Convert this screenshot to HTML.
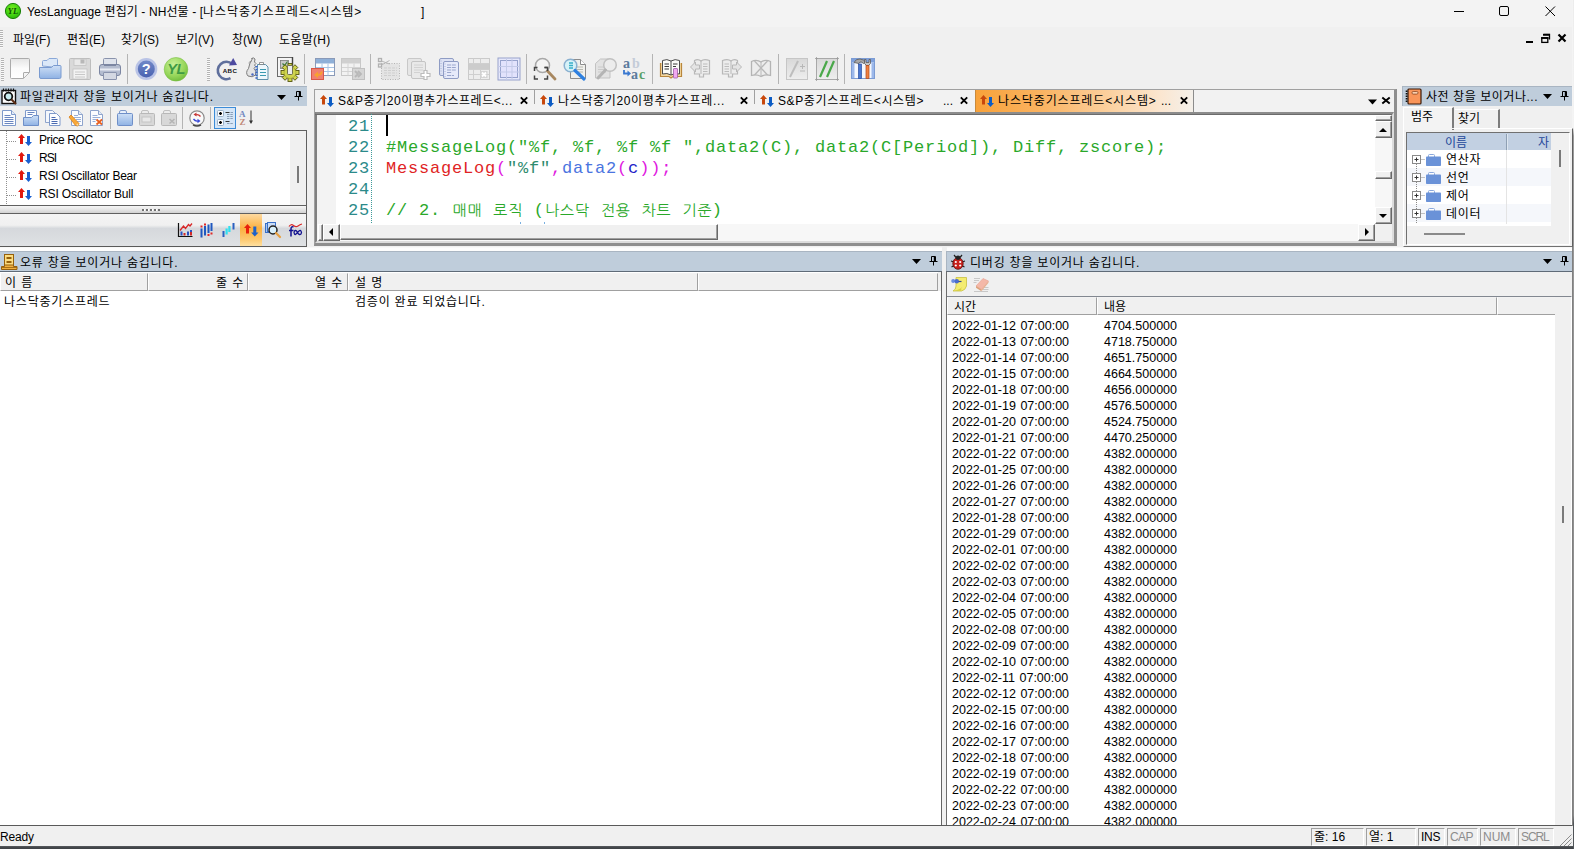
<!DOCTYPE html>
<html lang="ko">
<head>
<meta charset="utf-8">
<title>YesLanguage 편집기</title>
<style>
*{box-sizing:border-box;margin:0;padding:0}
html,body{width:1574px;height:849px;overflow:hidden;background:#f0f0f0}
body{font-family:"Liberation Sans","Noto Sans CJK KR",sans-serif;font-size:12px;color:#000;position:relative}
.a{position:absolute}
.t{position:absolute;white-space:nowrap;line-height:16px;height:16px;margin-top:1px}
#titlebar{left:0;top:0;width:1574px;height:27px;background:#f3f3f3}
.hdr{position:absolute;height:20px;background:#bfcddb}
.hdr .t{top:2px;font-size:12px;letter-spacing:.78px}
.sep{position:absolute;width:1px;background:#b4b4b4}
.grip{position:absolute;width:3px;background-image:repeating-linear-gradient(to bottom,#b4b4b4 0 1px,#fafafa 1px 2px)}
.colh{position:absolute;background:#f0f0f0;border-right:1px solid #a0a0a0;border-bottom:1px solid #a0a0a0;border-left:1px solid #fff;border-top:1px solid #f2f2f2}
.mono{font-family:"Liberation Mono","NanumGothicCoding","Noto Sans CJK KR",monospace;font-size:17px;letter-spacing:.8px;line-height:21px;height:21px;white-space:pre;position:absolute;margin-top:1px}
.btn3d{position:absolute;background:#f0f0f0;border:1px solid;border-color:#fff #696969 #696969 #fff;box-shadow:inset -1px -1px 0 #a0a0a0}
svg{position:absolute;overflow:visible}
.sc{top:828px;height:18px;border:1px solid;border-color:#a0a0a0 #fff #fff #a0a0a0}
.dr{font-size:12.5px;word-spacing:1px}
.k{font-size:15px;letter-spacing:-.1px}
</style>
</head>
<body>
<!-- title bar -->
<div id="titlebar" class="a"></div>
<svg style="left:4px;top:2px" width="18" height="18" viewBox="0 0 18 18">
  <defs><radialGradient id="gYL" cx="0.45" cy="0.35" r="0.75"><stop offset="0" stop-color="#7af020"/><stop offset="0.6" stop-color="#3fd010"/><stop offset="1" stop-color="#22a008"/></radialGradient></defs>
  <circle cx="9" cy="9" r="7.600" fill="url(#gYL)" stroke="#1c8208" stroke-width="1"/>
  <text x="9" y="12" font-family="Liberation Serif,serif" font-size="8.500" font-style="italic" font-weight="bold" fill="#0a5206" text-anchor="middle">YL</text>
</svg>
<div class="t" id="ttl" style="left:27px;top:3px;letter-spacing:.1px">YesLanguage 편집기 - NH선물 - [<span style="letter-spacing:.9px">나스닥중기스프레드&lt;시스템&gt;</span></div>
<div class="t" style="left:421px;top:3px">]</div>
<!-- window controls -->
<svg style="left:1450px;top:2px" width="110" height="20" viewBox="0 0 110 20" fill="none" stroke="#000" stroke-width="1">
  <path d="M4 9.5h10"/>
  <rect x="49.5" y="4.5" width="9" height="9" rx="1.5"/>
  <path d="M95.500 4.500l9.500 9.500M105 4.500l-9.500 9.500"/>
</svg>
<!-- menu bar -->
<div class="grip" style="left:0;top:30px;height:18px"></div>
<div class="t" style="left:13px;top:31px">파일(F)</div>
<div class="t" style="left:67px;top:31px">편집(E)</div>
<div class="t" style="left:121px;top:31px">찾기(S)</div>
<div class="t" style="left:176px;top:31px">보기(V)</div>
<div class="t" style="left:232px;top:31px">창(W)</div>
<div class="t" style="left:279px;top:31px;letter-spacing:.3px">도움말(H)</div>
<!-- MDI controls -->
<svg style="left:1524px;top:32px" width="46" height="14" viewBox="0 0 46 14" fill="none" stroke="#000">
  <path d="M2 10h7" stroke-width="2"/>
  <path d="M19.500 2.500h6v5" stroke-width="1.300"/><path d="M19 2.800h7" stroke-width="1.800"/>
  <rect x="17.800" y="5.800" width="6" height="4.600" stroke-width="1.300"/><path d="M17.200 6h7.200" stroke-width="1.800"/>
  <path d="M34.5 2.5l7 7M41.5 2.5l-7 7" stroke-width="2.2"/>
</svg>
<!-- main toolbar -->
<div class="grip" style="left:1px;top:58px;height:23px"></div>
<div class="grip" style="left:207px;top:58px;height:23px"></div>
<div class="sep" style="left:127px;top:54px;height:30px"></div>
<div class="sep" style="left:304px;top:54px;height:30px"></div>
<div class="sep" style="left:370px;top:54px;height:30px"></div>
<div class="sep" style="left:526px;top:54px;height:30px"></div>
<div class="sep" style="left:652px;top:54px;height:30px"></div>
<div class="sep" style="left:778px;top:54px;height:30px"></div>
<div class="sep" style="left:844px;top:54px;height:30px"></div>
<!--TBICONS-->
<svg width="0" height="0"><defs>
<linearGradient id="gPage" x1="0" y1="0" x2="0" y2="1"><stop offset="0" stop-color="#e4e4e4"/><stop offset="0.5" stop-color="#fbfbfb"/><stop offset="1" stop-color="#fff"/></linearGradient>
<linearGradient id="gFold" x1="0" y1="0" x2="0" y2="1"><stop offset="0" stop-color="#cfe0f6"/><stop offset="1" stop-color="#8fb2e4"/></linearGradient>
<linearGradient id="gHelp" x1="0" y1="0" x2="0" y2="1"><stop offset="0" stop-color="#7088c8"/><stop offset="1" stop-color="#4a62b0"/></linearGradient>
<radialGradient id="gYL2" cx="0.4" cy="0.3" r="0.8"><stop offset="0" stop-color="#c8f098"/><stop offset="0.6" stop-color="#96d65a"/><stop offset="1" stop-color="#66b434"/></radialGradient>
<linearGradient id="gGray" x1="0" y1="0" x2="0" y2="1"><stop offset="0" stop-color="#d8d8d8"/><stop offset="1" stop-color="#eeeeee"/></linearGradient>
</defs></svg>
<!-- new -->
<svg style="left:8px;top:57px" width="24" height="24" viewBox="0 0 24 24"><path d="M3.500 1.500h17q1 0 1 1v13l-6 6h-12q-1 0-1-1v-18q0-1 1-1z" fill="url(#gPage)" stroke="#ababab" stroke-width="1"/><path d="M21 15.500h-5q-0.500 0-0.500 0.500v5" fill="#f4f4f4" stroke="#ababab" stroke-width="1"/></svg>
<!-- open -->
<svg style="left:38px;top:57px" width="24" height="24" viewBox="0 0 24 24"><path d="M4.500 9v-4.500q0-1 1-1h3.500l2-2h7.500q1 0 1 1v8z" fill="#dbe8f8" stroke="#8aa8d8" stroke-width="1"/><path d="M1.500 10.500h12l2-2h6.500q1 0 1 1v10.500q0 1.500-1.500 1.500h-18.500q-1.500 0-1.500-1.500z" fill="url(#gFold)" stroke="#7a9bd0" stroke-width="1"/></svg>
<!-- save (disabled) -->
<svg style="left:68px;top:57px" width="24" height="24" viewBox="0 0 24 24"><rect x="1.500" y="1.500" width="21" height="21" rx="1" fill="#d9d9d9" stroke="#bdbdbd"/><rect x="6" y="2" width="12" height="6.500" fill="#e9e9e9" stroke="#c4c4c4" stroke-width="0.800"/><rect x="12.500" y="2.500" width="4" height="4" fill="#b8b8b8"/><rect x="5" y="12" width="14" height="10" fill="#f3f3f3" stroke="#c4c4c4" stroke-width="0.800"/><path d="M7 15h10M7 17.500h10M7 20h10" stroke="#c8c8c8" stroke-width="1"/></svg>
<!-- print -->
<svg style="left:98px;top:57px" width="24" height="24" viewBox="0 0 24 24"><rect x="5.500" y="1.500" width="13" height="9" rx="1" fill="#dfe3ec" stroke="#8a93ac"/><rect x="1.500" y="7.500" width="21" height="11" rx="2.500" fill="#b4bccf" stroke="#7c86a2"/><path d="M2 12.500h20" stroke="#e8ebf2" stroke-width="2"/><rect x="5.500" y="15.500" width="13" height="7" rx="0.500" fill="#d4d8e2" stroke="#8a93ac"/><path d="M6 8.500h12" stroke="#7c86a2" stroke-width="1"/></svg>
<!-- help -->
<svg style="left:134px;top:57px" width="24" height="24" viewBox="0 0 24 24"><circle cx="12.300" cy="12" r="11" fill="#b9c3e6"/><circle cx="12.300" cy="12" r="8.500" fill="url(#gHelp)"/><text x="12.300" y="17.300" font-family="Liberation Sans,sans-serif" font-size="14.500" font-weight="bold" fill="#fff" text-anchor="middle">?</text></svg>
<!-- YL -->
<svg style="left:164px;top:57px" width="24" height="24" viewBox="0 0 24 24"><circle cx="12" cy="12.300" r="11.800" fill="url(#gYL2)" stroke="#7cc048" stroke-width="0.600"/><text x="12" y="17.300" font-family="Liberation Sans,sans-serif" font-size="14.500" font-style="italic" font-weight="bold" fill="#3f9a44" text-anchor="middle" letter-spacing="-0.500">YL</text></svg>
<!-- ABC refresh -->
<svg style="left:215px;top:57px" width="24" height="24" viewBox="0 0 24 24"><path d="M15.500 21.200a8.700 8.700 0 1 1 1.800-14.200" fill="none" stroke="#5f6f9c" stroke-width="2.600"/><path d="M14 8.500l8-0.500l-3.800-7z" fill="#4d4aa0"/><text x="15" y="15.500" font-family="Liberation Sans,sans-serif" font-size="6.200" font-weight="bold" fill="#111" text-anchor="middle" letter-spacing="0.400">ABC</text></svg>
<!-- keys + doc -->
<svg style="left:245px;top:57px" width="24" height="24" viewBox="0 0 24 24"><path d="M6.500 1.500q2-1.500 3.500 0.500l-0.500 3l1.500 1.500l-1.500 1.500l1 1.500l-1.500 2q3 2.500 1.500 6.500q-3 3-7.500 1q-3-3.500 0.500-7.500q1-6 4-10z" fill="#e4e4e4" stroke="#7c7c7c" stroke-width="1"/><path d="M3.500 6q1.500-2 3-1.500" fill="none" stroke="#8c8c8c" stroke-width="0.800"/><path d="M12.500 10.500v-3h8l2.500 2.500v12.500h-11z" fill="#eef7fc" stroke="#5e8fa8" stroke-width="1"/><path d="M14.500 5.500h4v2h-4z" fill="#fff" stroke="#7c7c7c" stroke-width="0.800"/><path d="M15 12.500h6M15 15.500h6M15 18.500h6" stroke="#3a9ab0" stroke-width="1.200"/><path d="M11.500 9v13" stroke="#3a66c8" stroke-width="2.200" stroke-dasharray="1.600 1.200"/><circle cx="7.500" cy="17.500" r="1.200" fill="#4a6ac0"/></svg>
<!-- gear + doc -->
<svg style="left:275px;top:57px" width="24" height="24" viewBox="0 0 24 24"><rect x="2.500" y="0.500" width="15" height="19" fill="#f4f4f4" stroke="#6a6a6a"/><rect x="5.500" y="3.500" width="8" height="8" fill="#c8c8c8" stroke="#7a7a7a" stroke-width="0.800"/><path d="M7.500 6.500l2 2l3-4" stroke="#3a7a3a" stroke-width="1.200" fill="none"/><path d="M17.500 0v8" stroke="#444" stroke-width="1.400"/><g transform="translate(15 15.500)"><g fill="#cfd44e" stroke="#55550f" stroke-width="0.900"><rect x="-2" y="-9" width="4" height="18"/><rect x="-9" y="-2" width="18" height="4"/><rect x="-2" y="-9" width="4" height="18" transform="rotate(45)"/><rect x="-2" y="-9" width="4" height="18" transform="rotate(-45)"/></g><circle r="6" fill="#cfd44e"/><circle r="6" fill="none" stroke="#8a8a20" stroke-width="0.500"/><rect x="-2.500" y="-7" width="5" height="9" rx="1" fill="#ececec" stroke="#55553a" stroke-width="0.800"/></g></svg>
<!-- table import -->
<svg style="left:311px;top:57px" width="24" height="24" viewBox="0 0 24 24"><rect x="4.500" y="1.500" width="19" height="17" fill="#fff" stroke="#8a9ab8"/><rect x="5" y="2" width="18" height="4.500" fill="#8fb0d8"/><path d="M5 10.500h18M5 14.500h18M11 6.500v12M17 6.500v12" stroke="#a8c4e4" stroke-width="1"/><rect x="0.500" y="11.500" width="12" height="11" fill="#f08070" stroke="#d85848"/><path d="M10.500 14.500q0.500 3.500-4.500 3.500" stroke="#f8a030" stroke-width="2" fill="none"/><path d="M7 14.500l-4 3.500l4 3z" fill="#f8a030"/></svg>
<!-- table export (disabled) -->
<svg style="left:341px;top:57px" width="24" height="24" viewBox="0 0 24 24"><rect x="0.500" y="1.500" width="19" height="17" fill="#f2f2f2" stroke="#c8c8c8"/><rect x="1" y="2" width="18" height="4.500" fill="#d0d0d0"/><path d="M1 10.500h18M1 14.500h18M7 6.500v12M13 6.500v12" stroke="#d4d4d4" stroke-width="1"/><rect x="11.500" y="11.500" width="12" height="11" fill="#d6d6d6" stroke="#c0c0c0"/><path d="M14 14l3 3l-3 3M17 14l3 3l-3 3" stroke="#b8b8b8" stroke-width="1.800" fill="none"/></svg>
<!-- cut (disabled) -->
<svg style="left:377px;top:57px" width="24" height="24" viewBox="0 0 24 24"><rect x="4.500" y="6.500" width="18" height="16" fill="#e4e4e4" stroke="#b4b4b4" stroke-dasharray="1 1.500"/><path d="M7 11h13M7 13.500h13M7 16h13M7 18.500h13" stroke="#cfcfcf" stroke-width="1" stroke-dasharray="3 1"/><rect x="1.500" y="1.500" width="3" height="3" fill="none" stroke="#b0b0b0" stroke-width="1.300"/><rect x="1.500" y="7" width="3" height="3" fill="none" stroke="#b0b0b0" stroke-width="1.300"/><path d="M4.500 4l8 3M4.500 8l8-4.500" stroke="#b8b8b8" stroke-width="1"/></svg>
<!-- copy+ (disabled) -->
<svg style="left:407px;top:57px" width="24" height="24" viewBox="0 0 24 24"><rect x="0.500" y="1.500" width="14" height="17" rx="1.500" fill="#e6e6e6" stroke="#c8c8c8"/><rect x="4.500" y="4.500" width="14" height="17" rx="1.500" fill="#e9e9e9" stroke="#c4c4c4"/><path d="M7 8h9M7 10.500h9M7 13h9M7 15.500h6" stroke="#d2d2d2" stroke-width="1"/><path d="M17 13.500h3v3h3v3h-3v3h-3v-3h-3v-3h3z" fill="#fff" stroke="#bdbdbd" stroke-width="1.200"/></svg>
<!-- copy -->
<svg style="left:437px;top:57px" width="24" height="24" viewBox="0 0 24 24"><rect x="2.500" y="1.500" width="14" height="17" rx="1.500" fill="#dde2f4" stroke="#8f9cc4"/><rect x="6.500" y="4.500" width="15" height="17" rx="1.500" fill="#e6eafa" stroke="#8f9cc4"/><path d="M10 8h9M10 10.500h9M10 13h9M10 15.500h5M10 18.500h7" stroke="#9aa6cc" stroke-width="1" stroke-dasharray="4 0.800"/><path d="M8 6.500v14M4 3.500v13" stroke="#9aa6cc" stroke-width="0.800" stroke-dasharray="1 1.500"/></svg>
<!-- table delete (disabled) -->
<svg style="left:467px;top:57px" width="24" height="24" viewBox="0 0 24 24"><rect x="1.500" y="1.500" width="21" height="21" fill="#ededed" stroke="#cacaca"/><path d="M1.500 6.500h21M1.500 12.500h21M1.500 17.500h21M6.500 1.500v21M13.500 1.500v5M13.500 12.500v10" stroke="#cfcfcf" stroke-width="1"/><rect x="2" y="7" width="20" height="5" fill="#cccccc"/><rect x="13.500" y="14" width="7" height="7" fill="#d4d4d4"/><path d="M15 15.500l4 4M19 15.500l-4 4" stroke="#fff" stroke-width="1.800"/></svg>
<!-- grid select -->
<svg style="left:497px;top:57px" width="24" height="24" viewBox="0 0 24 24"><rect x="1" y="1" width="22" height="22" fill="#e6e8fb" stroke="#97a2cc" stroke-width="1"/><rect x="3.500" y="3.500" width="17" height="17" fill="#e2e2fc" stroke="#97a2cc" stroke-width="1"/><path d="M9.500 1v22M15 1v22M1 9.500h22M1 15h22" stroke="#c4cae8" stroke-width="1"/></svg>
<!-- find -->
<svg style="left:533px;top:57px" width="24" height="24" viewBox="0 0 24 24"><circle cx="9.500" cy="8.500" r="7" fill="#f4f4f4" stroke="#a8a8a8" stroke-width="1.500"/><path d="M14.500 14l7.500 8" stroke="#a88860" stroke-width="2.800" stroke-linecap="round"/><path d="M1.500 14v-3.500h3M14.500 10.500h-3M1.500 18.500v3.500h3.500M14.500 18.500v3.500h-3.500" stroke="#444" stroke-width="1.500" fill="none"/><path d="M11.500 10.500h3v3.500" stroke="#444" stroke-width="1.500" fill="none"/></svg>
<!-- find in doc -->
<svg style="left:563px;top:57px" width="24" height="24" viewBox="0 0 24 24"><path d="M7.500 2.500h10l5 5v14h-15z" fill="#f0f0ec" stroke="#8c8c8c"/><path d="M17.500 2.500v5h5" fill="#fff" stroke="#8c8c8c"/><path d="M13 10h7M13 12.500h7M13 15h7" stroke="#b8b8b0" stroke-width="1"/><circle cx="7.500" cy="8.500" r="6.300" fill="#d6f2f8" stroke="#8ab0d0" stroke-width="1.500"/><path d="M6 6h4M6 8.500h4M6 11h4" stroke="#3ab0c8" stroke-width="1.300"/><path d="M12 13.500l9 8.500" stroke="#2e80e0" stroke-width="3.200" stroke-linecap="round"/></svg>
<!-- find next (disabled) -->
<svg style="left:593px;top:57px" width="24" height="24" viewBox="0 0 24 24"><path d="M2.500 6.500l5-4.500h9.500v19h-14.500z" fill="#e2e2e2" stroke="#c2c2c2"/><path d="M5 10h8M5 12.500h8M5 15h8" stroke="#cacaca" stroke-width="1"/><circle cx="17" cy="8" r="6.300" fill="#ececec" stroke="#c0c0c0" stroke-width="1.500"/><path d="M12.500 13l-7.500 8" stroke="#b4b4b4" stroke-width="3" stroke-linecap="round"/></svg>
<!-- replace ab->ac -->
<svg style="left:623px;top:57px" width="24" height="24" viewBox="0 0 24 24"><text x="0" y="10.500" font-family="Liberation Serif,serif" font-size="14" font-weight="bold" fill="#5a7a9c">a</text><text x="9" y="10.500" font-family="Liberation Serif,serif" font-size="14" font-weight="bold" fill="#c4ccd8">b</text><text x="8" y="22" font-family="Liberation Serif,serif" font-size="14" font-weight="bold" fill="#5a7a9c">a</text><text x="16" y="22" font-family="Liberation Serif,serif" font-size="14" font-weight="bold" fill="#5aa068">c</text><path d="M1 13v3.500h4.500" stroke="#3a78d0" stroke-width="1.800" fill="none"/><path d="M4.500 13.500l3.500 3l-3.500 3z" fill="#3a78d0"/></svg>
<!-- book -->
<svg style="left:659px;top:57px" width="24" height="24" viewBox="0 0 24 24"><path d="M1.500 6v13.500h8.500l2 1.500l2-1.500h8.500v-13.500" fill="#f4d8a0" stroke="#b8863c" stroke-width="1.200"/><path d="M3.500 3.500q4.500-2 8.500 0.500q4-2.500 8.500-0.500v13.500q-4.500-1.500-8.500 1q-4-2.500-8.500-1z" fill="#fcfcf8" stroke="#4a4a4a" stroke-width="1"/><path d="M12 4v14" stroke="#4a4a4a" stroke-width="1"/><path d="M5.500 7h4.500M5.500 9.500h4.500M5.500 12h4.500M14 7h4.500M14 9.500h3" stroke="#3a3a3a" stroke-width="1"/><rect x="14.500" y="11.500" width="4" height="9.500" rx="0.500" fill="#f0a8f0" stroke="#a060a8" stroke-width="0.800"/></svg>
<!-- book prev (disabled) -->
<svg style="left:689px;top:57px" width="24" height="24" viewBox="0 0 24 24"><path d="M5.500 3.500q3.500-2 6.500 0.500q3-2.500 8.500-0.500v13.500h-6v3h-4v-3h-5z" fill="#ececec" stroke="#b8b8b8" stroke-width="1.200"/><path d="M1.500 10l5-5v3h4v4h-4v3z" fill="#e4e4e4" stroke="#b8b8b8" stroke-width="1"/><path d="M14 7h4.500M14 9.500h4.500M14 12h4.500M14 14.500h4.500" stroke="#bcbcbc" stroke-width="1"/><path d="M12 4v13" stroke="#b8b8b8"/></svg>
<!-- book next (disabled) -->
<svg style="left:719px;top:57px" width="24" height="24" viewBox="0 0 24 24"><path d="M3.500 3.500q5.500-2 8.500 0.500q3-2.500 6.500-0.500v13.500h-5v3h-4v-3h-6z" fill="#ececec" stroke="#b8b8b8" stroke-width="1.200"/><path d="M22.500 10l-5-5v3h-4v4h4v3z" fill="#e4e4e4" stroke="#b8b8b8" stroke-width="1"/><path d="M5.500 7h4.500M5.500 9.500h4.500M5.500 12h4.500M5.500 14.500h4.500" stroke="#bcbcbc" stroke-width="1"/><path d="M12 4v13" stroke="#b8b8b8"/></svg>
<!-- book clear (disabled) -->
<svg style="left:749px;top:57px" width="24" height="24" viewBox="0 0 24 24"><path d="M2.500 4.500q5-2.500 9.500 0.500q4.500-3 9.500-0.500v14q-5-1.500-9.500 1q-4.500-2.500-9.500-1z" fill="#ededed" stroke="#b4b4b4" stroke-width="1.300"/><path d="M5.500 4l13 14M18.500 4l-13 14" stroke="#b8b8b8" stroke-width="1.300"/><path d="M12 5v14" stroke="#b8b8b8"/></svg>
<!-- comment toggle (disabled) -->
<svg style="left:785px;top:57px" width="24" height="24" viewBox="0 0 24 24"><rect x="1.500" y="1.500" width="21" height="21" fill="url(#gGray)" stroke="#c6c6c6"/><path d="M5 20l8-16" stroke="#bdbdbd" stroke-width="2"/><path d="M15 9.500h5M17.500 7v5M15 14h5" stroke="#b8b8b8" stroke-width="1"/></svg>
<!-- comment -->
<svg style="left:815px;top:57px" width="24" height="24" viewBox="0 0 24 24"><rect x="1.500" y="1.500" width="21" height="21" fill="url(#gGray)" stroke="#a8a8a8"/><path d="M5 20l7-16M12 20l7-16" stroke="#4aa84a" stroke-width="2.200"/><path d="M0 1.500h3M1.500 0v3M21 1.500h3M22.500 0v3M0 22.500h3M1.500 21v3M21 22.500h3M22.500 21v3" stroke="#9c9c9c" stroke-width="0.800"/></svg>
<!-- tools -->
<svg style="left:851px;top:57px" width="24" height="24" viewBox="0 0 24 24"><rect x="0.500" y="1.500" width="23" height="20" fill="#f4f8fe" stroke="#7c9cd4"/><rect x="1" y="2" width="22" height="3.500" fill="#7ea0dc"/><rect x="1" y="5.500" width="2.500" height="15.500" fill="#9cb8ea"/><rect x="20.500" y="5.500" width="2.500" height="15.500" fill="#9cb8ea"/><path d="M3 5.500q2-4 6-3.500q4 0.500 5.500 3l-2 1.500q-2-2-3.500-1.500l-1 1.500z" fill="#a8a8a8" stroke="#5a5a5a" stroke-width="0.800"/><rect x="7.500" y="7" width="3" height="14.500" fill="#4a78d0" stroke="#2a4ea0" stroke-width="0.700"/><path d="M13.500 2.500v4l2 2h2l2-2v-4l-1.500 0v3h-3v-3z" fill="#c4c4c4" stroke="#5a5a5a" stroke-width="0.800"/><rect x="15" y="8.500" width="3" height="13" fill="#f08040" stroke="#b04818" stroke-width="0.700"/></svg>
<!-- left panel: file manager -->
<div class="hdr" style="left:0;top:86px;width:307px;border-top:1px solid #a9b5c2"><div class="t" style="left:20px;top:1px">파일관리자 창을 보이거나 숨깁니다.</div></div>
<svg style="left:1px;top:88px" width="17" height="17" viewBox="0 0 17 17">
  <rect x="1" y="2.500" width="13.500" height="13" fill="#fdfdfd" stroke="#111" stroke-width="1.400"/>
  <path d="M2.500 0.500v3M5 0.500v3M7.500 0.500v3M10 0.500v3M12.500 0.500v3" stroke="#111" stroke-width="1.200"/>
  <circle cx="7.500" cy="8.500" r="3.800" stroke="#111" stroke-width="1.800" fill="#c8ecf0"/><path d="M10.500 11.500l4.500 4.500" stroke="#5a2a10" stroke-width="2"/>
</svg>
<svg style="left:277px;top:92px" width="28" height="11" viewBox="0 0 28 11"><path d="M0 3h9l-4.500 5z" fill="#000"/><g transform="translate(0 -1)"><path d="M19.500 0.500h4v5h-4zM17.500 5.500h8M21.500 6v3.500" stroke="#000" stroke-width="1" fill="none"/><path d="M22.500 1v4.500" stroke="#000" stroke-width="1.400"/></g></svg>
<!--LEFTICONS-->
<div class="sep" style="left:110px;top:107px;height:22px"></div>
<div class="sep" style="left:182px;top:107px;height:22px"></div>
<div class="sep" style="left:210px;top:107px;height:22px"></div>
<div class="a" style="left:214px;top:107px;width:22px;height:22px;background:#d5e6f7;border:1px solid #3c8cd8"></div>
<!-- tree -->
<div class="a" style="left:0;top:130px;width:307px;height:76px;background:#f0f0f0;border:1px solid #606060;border-left:none"></div>
<div class="a" style="left:0;top:131px;width:290px;height:74px;background:#fff"></div>
<div class="a" style="left:6px;top:131px;width:1px;height:74px;background-image:repeating-linear-gradient(to bottom,#909090 0 1px,transparent 1px 2px)"></div>
<div class="a" style="left:7px;top:141px;width:10px;height:1px;background-image:repeating-linear-gradient(to right,#909090 0 1px,transparent 1px 2px)"></div>
<div class="a" style="left:7px;top:159px;width:10px;height:1px;background-image:repeating-linear-gradient(to right,#909090 0 1px,transparent 1px 2px)"></div>
<div class="a" style="left:7px;top:177px;width:10px;height:1px;background-image:repeating-linear-gradient(to right,#909090 0 1px,transparent 1px 2px)"></div>
<div class="a" style="left:7px;top:195px;width:10px;height:1px;background-image:repeating-linear-gradient(to right,#909090 0 1px,transparent 1px 2px)"></div>
<div class="t" style="left:39px;top:131px;letter-spacing:-.4px">Price ROC</div>
<div class="t" style="left:39px;top:149px;letter-spacing:-1px">RSI</div>
<div class="t" style="left:39px;top:167px;letter-spacing:-.22px">RSI Oscillator Bear</div>
<div class="t" style="left:39px;top:185px;letter-spacing:-.12px">RSI Oscillator Bull</div>
<div class="a" style="left:297px;top:166px;width:2px;height:17px;background:#7a7a7a"></div>
<!-- splitter -->
<div class="a" style="left:0;top:206px;width:307px;height:8px;background:linear-gradient(#f6f6f6,#e6e6e6 50%,#d2d2d2);border-bottom:1px solid #606060;border-right:1px solid #606060"></div>
<div class="a" style="left:142px;top:209px;width:18px;height:2px;background-image:repeating-linear-gradient(to right,#707070 0 2px,#fff 2px 3px,transparent 3px 4px)"></div>
<!-- bottom outlook bar -->
<div class="a" style="left:0;top:214px;width:307px;height:33px;background:linear-gradient(#f4f4f4 0,#f0f0f0 35%,#d5d8dc 45%,#dfe1e4 100%);border-bottom:1px solid #5a5a5a;border-right:1px solid #606060"></div>
<div class="a" style="left:240px;top:214px;width:22px;height:32px;background:linear-gradient(#fdd9a0,#fbb040 45%,#fdc970 80%,#ffe0a0)"></div>
<!--OUTICONS-->
<!-- left toolbar icons -->
<svg style="left:1px;top:110px" width="16" height="16" viewBox="0 0 16 16"><path d="M1.500 0.500h9l4 4v11h-13z" fill="#fcfdff" stroke="#7f9acb"/><path d="M10.500 0.500v4h4" fill="#e4ecf8" stroke="#7f9acb"/><path d="M3.500 5.500h6M3.500 7.500h9M3.500 9.500h9M3.500 11.500h9M3.500 13.500h9" stroke="#6a86c0" stroke-width="1"/></svg>
<svg style="left:23px;top:110px" width="16" height="16" viewBox="0 0 16 16"><path d="M2.500 7v-6.500h11v6.500" fill="#fcfdff" stroke="#7f9acb"/><path d="M4.500 2.500h7M4.500 4.500h5" stroke="#6a86c0" stroke-width="1"/><path d="M0.500 7.500h8l2-2h5v10h-15z" fill="url(#gFold)" stroke="#6f8fc8"/></svg>
<svg style="left:45px;top:110px" width="16" height="16" viewBox="0 0 16 16"><path d="M0.500 0.500h7l3 3v9h-10z" fill="#f4f7fc" stroke="#8fa4cc"/><path d="M4.500 3.500h7l3.500 3.500v8.500h-10.500z" fill="#fcfdff" stroke="#7f9acb"/><path d="M6.500 7.500h4M6.500 9.500h6M6.500 11.500h6M6.500 13.500h6" stroke="#4a6ab0" stroke-width="1"/></svg>
<svg style="left:68px;top:110px" width="16" height="16" viewBox="0 0 16 16"><path d="M3.500 0.500h7l4 4v11h-11z" fill="#fcfdff" stroke="#8fa4cc"/><path d="M10.500 0.500v4h4" fill="#e4ecf8" stroke="#8fa4cc"/><path d="M6 5.500h4M6 7.500h7M8 9.500h5M9 11.500h4" stroke="#9ab0d8" stroke-width="1"/><path d="M1 7l2-2l8 8.500l-1 2.500l-2.500-0.500z" fill="#f8a838" stroke="#d8801c" stroke-width="0.800"/><path d="M8 15l2.500 0.800l-0.500-2.300z" fill="#f4e0b0"/></svg>
<svg style="left:89px;top:110px" width="16" height="16" viewBox="0 0 16 16"><path d="M1.500 0.500h8l4 4v11h-12z" fill="#fcfdff" stroke="#8fa4cc"/><path d="M9.500 0.500v4h4" fill="#e4ecf8" stroke="#8fa4cc"/><path d="M3.500 5.500h5M3.500 7.500h8M3.500 9.500h4M3.500 11.500h3" stroke="#9ab0d8" stroke-width="1"/><path d="M7.500 9.500l5.500 5M13 9.500l-5.500 5" stroke="#e86020" stroke-width="1.800"/></svg>
<svg style="left:117px;top:110px" width="16" height="16" viewBox="0 0 16 16"><path d="M2.500 4v-2q0-1.500 1.500-1.500h4q1.500 0 1.500 1.500v2" fill="#e8f0fc" stroke="#7f9acb"/><path d="M0.500 4.500q0-1 1-1h13q1 0 1 1v10q0 1-1 1h-13q-1 0-1-1z" fill="url(#gFold)" stroke="#6f8fc8"/></svg>
<svg style="left:139px;top:110px" width="16" height="16" viewBox="0 0 16 16"><path d="M2.500 4v-2q0-1.500 1.500-1.500h4q1.500 0 1.500 1.500v2" fill="#ececec" stroke="#c0c0c0"/><path d="M0.500 4.500q0-1 1-1h13q1 0 1 1v10q0 1-1 1h-13q-1 0-1-1z" fill="#d8d8d8" stroke="#b8b8b8"/><rect x="3" y="7" width="9" height="5" fill="#e8e8e8" stroke="#c4c4c4"/></svg>
<svg style="left:161px;top:110px" width="16" height="16" viewBox="0 0 16 16"><path d="M2.500 4v-2q0-1.500 1.500-1.500h4q1.500 0 1.500 1.500v2" fill="#ececec" stroke="#c0c0c0"/><path d="M0.500 4.500q0-1 1-1h13q1 0 1 1v10q0 1-1 1h-13q-1 0-1-1z" fill="#d8d8d8" stroke="#b8b8b8"/><path d="M8.500 9l5 4.500M13.500 9l-5 4.500" stroke="#b4b4b4" stroke-width="1.500"/></svg>
<svg style="left:189px;top:110px" width="16" height="16" viewBox="0 0 16 16"><circle cx="8" cy="8" r="7.200" fill="#fafafa" stroke="#8c8c8c" stroke-width="1.200"/><path d="M4 14.800a7.500 7.500 0 0 0 8 0" stroke="#444" stroke-width="1.500" fill="none"/><path d="M11.500 6.500q-2-2.500-5-1.500" stroke="#c83838" stroke-width="1.300" fill="none"/><path d="M4.500 4.500l3-2v4z" fill="#c83838"/><path d="M4.500 9q2 2.800 5 1.800" stroke="#3a4ad8" stroke-width="1.300" fill="none"/><path d="M11.500 11l-3 2.200v-4.400z" fill="#3a4ad8"/></svg>
<svg style="left:217px;top:110px" width="16" height="16" viewBox="0 0 16 16"><rect x="0.500" y="0.500" width="6" height="6" rx="1" fill="#fff" stroke="#9ab0c8"/><rect x="0.500" y="9.500" width="6" height="6" rx="1" fill="#fff" stroke="#9ab0c8"/><path d="M3.500 2v3M2 3.500h3M3.500 11v3M2 12.500h3" stroke="#000" stroke-width="1.400"/><path d="M8.500 2.500h4M8.500 11.500h4" stroke="#333" stroke-width="1.200"/><path d="M10 4.500h6M10 6.500h6M10 8.500h6M10 13.500h6M13.500 2.500h2.500" stroke="#8aa0b8" stroke-width="1" stroke-dasharray="2.500 0.800"/></svg>
<svg style="left:239px;top:110px" width="16" height="16" viewBox="0 0 16 16"><text x="0" y="7" font-family="Liberation Serif,serif" font-size="9" font-weight="bold" fill="#7088c0">A</text><text x="0.500" y="15" font-family="Liberation Serif,serif" font-size="9" font-weight="bold" fill="#c08878">Z</text><path d="M12 0.500v12" stroke="#333" stroke-width="1"/><path d="M10 10.500h4l-2 3.500z" fill="#333"/></svg>
<!-- tree arrows -->
<svg style="left:18px;top:134px" width="14" height="12" viewBox="0 0 14 12"><path d="M3.500 0l3.500 4h-2v6h-3v-6h-2z" fill="#e2190f"/><path d="M10.500 12l3.500-4h-2v-6h-3v6h-2z" fill="#1a5fd0"/></svg>
<svg style="left:18px;top:152px" width="14" height="12" viewBox="0 0 14 12"><path d="M3.500 0l3.500 4h-2v6h-3v-6h-2z" fill="#e2190f"/><path d="M10.500 12l3.500-4h-2v-6h-3v6h-2z" fill="#1a5fd0"/></svg>
<svg style="left:18px;top:170px" width="14" height="12" viewBox="0 0 14 12"><path d="M3.500 0l3.500 4h-2v6h-3v-6h-2z" fill="#e2190f"/><path d="M10.500 12l3.500-4h-2v-6h-3v6h-2z" fill="#1a5fd0"/></svg>
<svg style="left:18px;top:188px" width="14" height="12" viewBox="0 0 14 12"><path d="M3.500 0l3.500 4h-2v6h-3v-6h-2z" fill="#e2190f"/><path d="M10.500 12l3.500-4h-2v-6h-3v6h-2z" fill="#1a5fd0"/></svg>
<!-- outlook bar icons -->
<svg style="left:178px;top:222px" width="15" height="16" viewBox="0 0 15 16"><path d="M0.500 1v13.500h14" fill="none" stroke="#111" stroke-width="1.200"/><path d="M2.500 9.500h2v4h-2zM9 9.500h2v4h-2z" fill="#2a50c0"/><path d="M5.500 11h2v2.500h-2zM12 8h2v5.500h-2z" fill="#d02828"/><path d="M12 8h2v2h-2z" fill="#2a50c0"/><path d="M2 8.500l3.500-4.500l2 2.500l3-4l1.500 1.500l2-2.500" fill="none" stroke="#d82828" stroke-width="1.300"/></svg>
<svg style="left:200px;top:222px" width="13" height="16" viewBox="0 0 13 16"><path d="M0.500 6.500h2v9h-2zM4 4h2v9.500h-2zM7.500 2.500h2v8.500h-2zM10.500 1h2v8h-2z" fill="#1f58c0"/><path d="M0.500 3.500h2v2h-2zM4 1.500h2v2h-2zM7.500 12h2v2h-2zM10.500 10.500h2v2h-2z" fill="#e02828"/></svg>
<svg style="left:222px;top:222px" width="13" height="16" viewBox="0 0 13 16"><path d="M0.500 9h2v6h-2z" fill="#2a60c0"/><path d="M3.500 6.500h2.200v6h-2.200zM6.300 4h2.200v6h-2.200z" fill="#30e0f0"/><path d="M10.500 1h2v6.500h-2z" fill="#2a60c0"/></svg>
<svg style="left:244px;top:224px" width="15" height="13" viewBox="0 0 15 13"><path d="M3.500 0l3.500 4h-2v5.500h-3v-5.500h-2z" fill="#e8200c"/><path d="M10.800 12.500l3.700-4h-2.200v-6h-3v6h-2.200z" fill="#1f62c8"/></svg>
<svg style="left:265px;top:222px" width="16" height="16" viewBox="0 0 16 16"><rect x="0.500" y="1.500" width="7" height="9" fill="#a8c8f0" stroke="#3a70c8"/><rect x="2.500" y="0.500" width="8" height="9" fill="#c8dcf8" stroke="#3a70c8"/><circle cx="8" cy="8" r="4" fill="#d8f0fc" stroke="#222" stroke-width="1.500"/><path d="M11 11l4 4" stroke="#e8a040" stroke-width="2.200" stroke-linecap="round"/></svg>
<svg style="left:288px;top:222px" width="15" height="16" viewBox="0 0 15 16"><path d="M1 4.500q2-3 4.500-1t4.500 0.500t4-2" fill="none" stroke="#d82828" stroke-width="1.200"/><path d="M5.500 5q-2.500-1-2.500 2v7.500M1 8.500h4.500" fill="none" stroke="#101090" stroke-width="1.500"/><path d="M6.500 9q1.500-1.500 3 1.500t3.500 1.500q1-1.500 0-3t-3.500 1.500t-3 1.500q-1-1.500 0-3z" fill="none" stroke="#101090" stroke-width="1.300"/></svg>
<!-- editor MDI area -->
<div class="a" style="left:314px;top:89px;width:1083px;height:157px;background:#f0f0f0;border:1px solid #a0a0a0;border-right:3px solid #8e8e8e;border-bottom:3px solid #8e8e8e"></div>
<!-- tabs -->
<div class="a" style="left:316px;top:90px;width:1078px;height:22px;background:#f2f2f2"></div>
<div class="a" style="left:975px;top:90px;width:219px;height:22px;background:linear-gradient(to right,#f8a23a 0,#fab361 30%,#fbcf9c 60%,#fbe6d0 85%,#f4f0ea 100%);border-right:1px solid #8c8c8c;border-left:1px solid #c98a3c"></div>
<div class="a" style="left:534px;top:90px;width:1px;height:14px;background:#a0a0a0"></div>
<div class="a" style="left:754px;top:90px;width:1px;height:14px;background:#a0a0a0"></div>
<div class="t" style="left:338px;top:92px;letter-spacing:.53px">S&amp;P중기20이평추가스프레드&lt;...</div>
<div class="t" style="left:558px;top:92px;letter-spacing:.65px">나스닥중기20이평추가스프레...</div>
<div class="t" style="left:778px;top:92px;letter-spacing:.62px">S&amp;P중기스프레드&lt;시스템&gt;</div>
<div class="t" style="left:943px;top:92px">...</div>
<div class="t" style="left:998px;top:92px;letter-spacing:.87px">나스닥중기스프레드&lt;시스템&gt;</div>
<div class="t" style="left:1161px;top:92px">...</div>
<!--TABICONS-->
<!-- editor sunken frame -->
<div class="a" style="left:315px;top:112px;width:1079px;height:131px;background:#fff;border:2px solid;border-color:#8c8c8c #dcdcdc #dcdcdc #808080;border-top-width:3px"></div><div class="a" style="left:315px;top:114px;width:1077px;height:1px;background:#6c6c6c"></div>
<div class="a" style="left:317px;top:115px;width:1058px;height:109px;background:#fff"></div>
<!-- gutter -->
<div class="a" style="left:317px;top:115px;width:19px;height:109px;background:#f3f3f3"></div>
<div class="a" style="left:371px;top:114px;width:1px;height:110px;background-image:repeating-linear-gradient(to bottom,#3f9a9a 0 1px,transparent 1px 2px)"></div>
<div class="a" style="left:386px;top:115px;width:2px;height:21px;background:#000"></div>
<div class="mono" style="left:348px;top:115px;color:#2b8a8a">21</div>
<div class="mono" style="left:348px;top:136px;color:#2b8a8a">22</div>
<div class="mono" style="left:348px;top:157px;color:#2b8a8a">23</div>
<div class="mono" style="left:348px;top:178px;color:#2b8a8a">24</div>
<div class="mono" style="left:348px;top:199px;color:#2b8a8a">25</div>
<div class="mono" id="code22" style="left:386px;top:136px;color:#2aa82a">#MessageLog("%f, %f, %f %f ",data2(C), data2(C[Period]), Diff, zscore);</div>
<div class="mono" id="code23" style="left:386px;top:157px;color:#e018e0"><span style="color:#e02424">MessageLog</span>(<span style="color:#2e8b6e">"%f"</span>,<span style="color:#4a74e0">data2</span>(<span style="color:#2222c8">c</span>));</div>
<div class="mono" id="code25" style="left:386px;top:199px;color:#2aa82a">// 2. <span class="k">매매</span> <span class="k">로직</span> (<span class="k">나스닥</span> <span class="k">전용</span> <span class="k">차트</span> <span class="k">기준</span>)</div>
<!-- partially visible line 26 tops -->
<div class="a" style="left:520px;top:222px;width:1px;height:2px;background:#7ab0e0"></div>
<div class="a" style="left:544px;top:222px;width:1px;height:2px;background:#7ab0e0"></div>
<!-- scrollbars -->
<div class="a" style="left:317px;top:224px;width:1058px;height:17px;background:#f7f7f7"></div>
<div class="a" style="left:1375px;top:115px;width:17px;height:109px;background:#f7f7f7"></div>
<div class="a" style="left:1375px;top:224px;width:17px;height:17px;background:#f0f0f0"></div>
<div class="btn3d" style="left:318px;top:224px;width:5px;height:17px"></div>
<div class="btn3d" style="left:323px;top:224px;width:17px;height:17px"></div>
<div class="btn3d" style="left:340px;top:224px;width:378px;height:16px"></div>
<div class="btn3d" style="left:1358px;top:224px;width:17px;height:17px"></div>
<div class="btn3d" style="left:1375px;top:115px;width:17px;height:6px"></div>
<div class="btn3d" style="left:1375px;top:121px;width:17px;height:17px"></div>
<div class="btn3d" style="left:1375px;top:171px;width:17px;height:8px"></div>
<div class="btn3d" style="left:1375px;top:207px;width:17px;height:17px"></div>
<svg style="left:318px;top:114px" width="1076" height="128" viewBox="0 0 1076 128" fill="#000">
  <path d="M15 114v8l-4-4z"/>
  <path d="M1047 114v8l4-4z"/>
  <path d="M1061 18h8l-4-4z"/>
  <path d="M1061 100h8l-4 4z"/>
</svg>
<!-- tab-bar right controls -->
<svg style="left:1366px;top:96px" width="28" height="12" viewBox="0 0 28 12"><path d="M2 3.5h9l-4.5 5z" fill="#000"/><path d="M16.300 1.400l7.400 6.200M23.700 1.400l-7.400 6.200" stroke="#000" stroke-width="1.900" fill="none"/></svg>
<!-- tab icons -->
<svg style="left:320px;top:95px" width="14" height="12" viewBox="0 0 14 12"><path d="M3.500 0l3.500 4h-2v5.500h-3v-5.500h-2z" fill="#c8480c"/><path d="M10.500 12l3.500-4h-2v-6h-3v6h-2z" fill="#0c5cc4"/></svg>
<svg style="left:540px;top:95px" width="14" height="12" viewBox="0 0 14 12"><path d="M3.500 0l3.500 4h-2v5.500h-3v-5.500h-2z" fill="#c8480c"/><path d="M10.500 12l3.500-4h-2v-6h-3v6h-2z" fill="#0c5cc4"/></svg>
<svg style="left:760px;top:95px" width="14" height="12" viewBox="0 0 14 12"><path d="M3.500 0l3.500 4h-2v5.500h-3v-5.500h-2z" fill="#c8480c"/><path d="M10.500 12l3.500-4h-2v-6h-3v6h-2z" fill="#0c5cc4"/></svg>
<svg style="left:980px;top:95px" width="14" height="12" viewBox="0 0 14 12"><path d="M3.500 0l3.500 4h-2v5.500h-3v-5.500h-2z" fill="#c8480c"/><path d="M10.500 12l3.500-4h-2v-6h-3v6h-2z" fill="#0c5cc4"/></svg>
<svg style="left:520px;top:97px" width="8" height="7" viewBox="0 0 8 7"><path d="M0.800 0.400l6.400 6.200M7.200 0.400l-6.400 6.200" stroke="#000" stroke-width="1.900" fill="none"/></svg>
<svg style="left:740px;top:97px" width="8" height="7" viewBox="0 0 8 7"><path d="M0.800 0.400l6.400 6.200M7.200 0.400l-6.400 6.200" stroke="#000" stroke-width="1.900" fill="none"/></svg>
<svg style="left:960px;top:97px" width="8" height="7" viewBox="0 0 8 7"><path d="M0.800 0.400l6.400 6.200M7.200 0.400l-6.400 6.200" stroke="#000" stroke-width="1.900" fill="none"/></svg>
<svg style="left:1180px;top:97px" width="8" height="7" viewBox="0 0 8 7"><path d="M0.800 0.400l6.400 6.200M7.200 0.400l-6.400 6.200" stroke="#000" stroke-width="1.900" fill="none"/></svg>
<!-- right panel: dictionary -->
<div class="hdr" style="left:1402px;top:86px;width:171px;border-top:1px solid #a9b5c2;border-left:1px solid #a9b5c2"><div class="t" style="left:23px;top:1px;letter-spacing:.55px">사전 창을 보이거나...</div></div>
<svg style="left:1405px;top:88px" width="18" height="17" viewBox="0 0 18 17">
  <rect x="3" y="1" width="13" height="15" rx="1" fill="#f9955a" stroke="#3a1a08" stroke-width="1.200"/>
  <path d="M1.600 2.500v12.500" stroke="#111" stroke-width="1.800" stroke-dasharray="1.500 1"/>
  <rect x="7" y="3.5" width="6" height="2.6" rx="1.2" fill="#fbd0b0" stroke="#7a3a18" stroke-width="0.7"/>
</svg>
<svg style="left:1543px;top:92px" width="28" height="11" viewBox="0 0 28 11"><path d="M0 2h9l-4.500 5z" fill="#000"/><g transform="translate(0 -1)"><path d="M19.500 0.500h4v5h-4zM17.500 5.500h8M21.500 6v3.500" stroke="#000" stroke-width="1" fill="none"/><path d="M22.500 1v4.500" stroke="#000" stroke-width="1.400"/></g></svg>
<!-- tabs -->
<div class="a" style="left:1403px;top:107px;width:51px;height:23px;background:#f3f3f3;border-right:2px solid #7c7c7c;border-left:1px solid #fff;border-top:1px solid #fff"></div>
<div class="a" style="left:1455px;top:109px;width:45px;height:19px;border-right:2px solid #7c7c7c;border-top:1px solid #fff"></div>
<div class="t" style="left:1411px;top:108px">범주</div>
<div class="t" style="left:1458px;top:110px">찾기</div>
<!-- list frame -->
<div class="a" style="left:1403px;top:128px;width:170px;height:119px;border:1px solid;border-color:#fff #606060 #707070 #fff"></div><div class="a" style="left:1454px;top:128px;width:118px;height:1px;background:#fff"></div><div class="a" style="left:1404px;top:128px;width:50px;height:1px;background:#f3f3f3"></div>
<div class="a" style="left:1406px;top:132px;width:164px;height:113px;background:#f0f0f0;border:1px solid;border-color:#707070 #fff #fff #707070"></div>
<div class="a" style="left:1407px;top:133px;width:144px;height:93px;background:#fff"></div>
<div class="a" style="left:1407px;top:133px;width:144px;height:17px;background:#c2d0e2"></div>
<div class="a" style="left:1506px;top:134px;width:1px;height:16px;background:#8fa0b4;border-right:1px solid #dde6f0;width:2px"></div>
<div class="t" style="left:1445px;top:134px;color:#23479a">이름</div>
<div class="t" style="left:1538px;top:134px;color:#23479a;width:13px;overflow:hidden">자</div>
<div class="a" style="left:1407px;top:168px;width:144px;height:18px;background:#f5f7fb"></div>
<div class="a" style="left:1407px;top:204px;width:144px;height:18px;background:#f5f7fb"></div>
<div class="a" style="left:1506px;top:150px;width:1px;height:74px;background:#e4e4e4"></div>
<div class="t" style="left:1446px;top:151px;letter-spacing:.7px">연산자</div>
<div class="t" style="left:1446px;top:169px;letter-spacing:.7px">선언</div>
<div class="t" style="left:1446px;top:187px;letter-spacing:.7px">제어</div>
<div class="t" style="left:1446px;top:205px;letter-spacing:.7px">데이터</div>
<!--RICONS-->
<div class="a" style="left:1559px;top:150px;width:2px;height:17px;background:#7a7a7a"></div>
<div class="a" style="left:1424px;top:233px;width:41px;height:2px;background:#8a8a8a"></div>
<!-- right list icons -->
<svg style="left:1412px;top:155px" width="30" height="14" viewBox="0 0 30 14"><rect x="0.500" y="0.500" width="8" height="8" fill="#fff" stroke="#8a8a8a"/><path d="M2.500 4.500h4M4.500 2.500v4" stroke="#333" stroke-width="1"/><path d="M9.500 4.500h4" stroke="#8a8a8a" stroke-width="1" stroke-dasharray="1 1"/><path d="M16.500 2v-1.500q0-1 1-1h4q1 0 1 1v1.500" fill="#fff" stroke="#8aa8dc" stroke-width="1"/><rect x="14" y="1.500" width="15" height="9.500" rx="0.800" fill="#6a92d8"/></svg>
<div class="a" style="left:1416px;top:164px;width:1px;height:9px;background-image:repeating-linear-gradient(to bottom,#8a8a8a 0 1px,transparent 1px 2px)"></div>
<svg style="left:1412px;top:173px" width="30" height="14" viewBox="0 0 30 14"><rect x="0.500" y="0.500" width="8" height="8" fill="#fff" stroke="#8a8a8a"/><path d="M2.500 4.500h4M4.500 2.500v4" stroke="#333" stroke-width="1"/><path d="M9.500 4.500h4" stroke="#8a8a8a" stroke-width="1" stroke-dasharray="1 1"/><path d="M16.500 2v-1.500q0-1 1-1h4q1 0 1 1v1.500" fill="#fff" stroke="#8aa8dc" stroke-width="1"/><rect x="14" y="1.500" width="15" height="9.500" rx="0.800" fill="#6a92d8"/></svg>
<div class="a" style="left:1416px;top:182px;width:1px;height:9px;background-image:repeating-linear-gradient(to bottom,#8a8a8a 0 1px,transparent 1px 2px)"></div>
<svg style="left:1412px;top:191px" width="30" height="14" viewBox="0 0 30 14"><rect x="0.500" y="0.500" width="8" height="8" fill="#fff" stroke="#8a8a8a"/><path d="M2.500 4.500h4M4.500 2.500v4" stroke="#333" stroke-width="1"/><path d="M9.500 4.500h4" stroke="#8a8a8a" stroke-width="1" stroke-dasharray="1 1"/><path d="M16.500 2v-1.500q0-1 1-1h4q1 0 1 1v1.500" fill="#fff" stroke="#8aa8dc" stroke-width="1"/><rect x="14" y="1.500" width="15" height="9.500" rx="0.800" fill="#6a92d8"/></svg>
<div class="a" style="left:1416px;top:200px;width:1px;height:9px;background-image:repeating-linear-gradient(to bottom,#8a8a8a 0 1px,transparent 1px 2px)"></div>
<svg style="left:1412px;top:209px" width="30" height="14" viewBox="0 0 30 14"><rect x="0.500" y="0.500" width="8" height="8" fill="#fff" stroke="#8a8a8a"/><path d="M2.500 4.500h4M4.500 2.500v4" stroke="#333" stroke-width="1"/><path d="M9.500 4.500h4" stroke="#8a8a8a" stroke-width="1" stroke-dasharray="1 1"/><path d="M16.500 2v-1.500q0-1 1-1h4q1 0 1 1v1.500" fill="#fff" stroke="#8aa8dc" stroke-width="1"/><rect x="14" y="1.500" width="15" height="9.500" rx="0.800" fill="#6a92d8"/></svg>
<div class="a" style="left:1416px;top:218px;width:1px;height:6px;background-image:repeating-linear-gradient(to bottom,#8a8a8a 0 1px,transparent 1px 2px)"></div>
<!-- error panel -->
<div class="a" style="left:0;top:247px;width:942px;height:4px;background:linear-gradient(#f4f4f4,#fdfdfd 30%)"></div><div class="a" style="left:947px;top:247px;width:625px;height:4px;background:linear-gradient(#f4f4f4,#fdfdfd 30%)"></div>
<div class="hdr" style="left:0;top:251px;width:942px;border-top:1px solid #a9b5c2"><div class="t" style="left:20px">오류 창을 보이거나 숨깁니다.</div></div>
<svg style="left:1px;top:254px" width="17" height="17" viewBox="0 0 17 17">
  <rect x="3.500" y="0.500" width="9" height="11" fill="#fbdc80" stroke="#96600c" stroke-width="1"/>
  <path d="M5.500 4h5M5.500 8h5" stroke="#96600c" stroke-width="2"/>
  <path d="M0.500 15.500v-3h3v-1.500h9v1.500h3.500v3z" fill="#f0b040" stroke="#96600c" stroke-width="1"/>
  <path d="M1 13.500h15" stroke="#96600c" stroke-width="0.800"/>
</svg>
<svg style="left:912px;top:257px" width="28" height="11" viewBox="0 0 28 11"><path d="M0 2h9l-4.500 5z" fill="#000"/><g transform="translate(0 -1)"><path d="M19.500 0.500h4v5h-4zM17.500 5.500h8M21.500 6v3.500" stroke="#000" stroke-width="1" fill="none"/><path d="M22.500 1v4.500" stroke="#000" stroke-width="1.400"/></g></svg>
<div class="a" style="left:0;top:271px;width:942px;height:555px;background:#fff;border-right:1px solid #646464;border-top:1px solid #5f6b78"></div>
<div class="a" style="left:938px;top:272px;width:3px;height:19px;background:#f0f0f0"></div>
<div class="colh" style="left:0;top:273px;width:148px;height:18px"></div>
<div class="colh" style="left:148px;top:273px;width:100px;height:18px"></div>
<div class="colh" style="left:248px;top:273px;width:100px;height:18px"></div>
<div class="colh" style="left:348px;top:273px;width:350px;height:18px"></div>
<div class="colh" style="left:698px;top:273px;width:240px;height:18px"></div>
<div class="t" style="left:5px;top:274px;word-spacing:2px">이 름</div>
<div class="t" style="left:216px;top:274px;word-spacing:2px">줄 수</div>
<div class="t" style="left:315px;top:274px;word-spacing:2px">열 수</div>
<div class="t" style="left:355px;top:274px;word-spacing:2px">설 명</div>
<div class="t" style="left:4px;top:293px;letter-spacing:.78px">나스닥중기스프레드</div>
<div class="t" style="left:355px;top:293px;letter-spacing:.78px">검증이 완료 되었습니다.</div>
<!-- debug panel -->
<div class="hdr" style="left:946px;top:251px;width:627px;border-top:1px solid #a9b5c2;border-left:1px solid #a9b5c2"><div class="t" style="left:23px">디버깅 창을 보이거나 숨깁니다.</div></div>
<svg style="left:949px;top:253px" width="18" height="18" viewBox="0 0 18 18">
  <path d="M5 2l2.500 3M13 2l-2.500 3M2 8l3 1M16 8l-3 1M2.500 14l3-1.500M15.500 14l-3-1.500" stroke="#222" stroke-width="1.200" fill="none"/>
  <ellipse cx="9" cy="10.500" rx="5.200" ry="5.800" fill="#c8201c" stroke="#5a0a08" stroke-width="0.800"/>
  <circle cx="9" cy="4.800" r="2.300" fill="#222"/>
  <circle cx="6.800" cy="9" r="1.100" fill="#fff"/><circle cx="11.200" cy="9" r="1.100" fill="#fff"/><circle cx="6.800" cy="12.500" r="1.100" fill="#fff"/><circle cx="11.200" cy="12.500" r="1.100" fill="#fff"/>
</svg>
<svg style="left:1543px;top:257px" width="28" height="11" viewBox="0 0 28 11"><path d="M0 2h9l-4.500 5z" fill="#000"/><g transform="translate(0 -1)"><path d="M19.500 0.500h4v5h-4zM17.500 5.500h8M21.500 6v3.500" stroke="#000" stroke-width="1" fill="none"/><path d="M22.500 1v4.500" stroke="#000" stroke-width="1.400"/></g></svg>
<div class="a" style="left:946px;top:271px;width:627px;height:555px;border-left:1px solid #6c6c6c;border-top:1px solid #5f6b78"></div>

<div class="a" style="left:947px;top:296px;width:625px;height:530px;background:#f0f0f0;border-top:1px solid #828790;border-right:1px solid #fff"></div>
<div class="a" style="left:947px;top:297px;width:608px;height:529px;background:#fff"></div>
<div class="colh" style="left:947px;top:297px;width:150px;height:18px"></div>
<div class="colh" style="left:1097px;top:297px;width:400px;height:18px"></div>
<div class="colh" style="left:1497px;top:297px;width:58px;height:18px;border-right:none"></div>
<div class="t" style="left:954px;top:298px">시간</div>
<div class="t" style="left:1104px;top:298px">내용</div>
<div class="a" style="left:1562px;top:506px;width:2px;height:17px;background:#7a7a7a"></div>
<div class="a" id="dbgrows" style="left:948px;top:317px;width:607px;height:508px;overflow:hidden">
<div class="t dr" style="left:4px;top:0px">2022-01-12 07:00:00</div><div class="t dr" style="left:156px;top:0px">4704.500000</div>
<div class="t dr" style="left:4px;top:16px">2022-01-13 07:00:00</div><div class="t dr" style="left:156px;top:16px">4718.750000</div>
<div class="t dr" style="left:4px;top:32px">2022-01-14 07:00:00</div><div class="t dr" style="left:156px;top:32px">4651.750000</div>
<div class="t dr" style="left:4px;top:48px">2022-01-15 07:00:00</div><div class="t dr" style="left:156px;top:48px">4664.500000</div>
<div class="t dr" style="left:4px;top:64px">2022-01-18 07:00:00</div><div class="t dr" style="left:156px;top:64px">4656.000000</div>
<div class="t dr" style="left:4px;top:80px">2022-01-19 07:00:00</div><div class="t dr" style="left:156px;top:80px">4576.500000</div>
<div class="t dr" style="left:4px;top:96px">2022-01-20 07:00:00</div><div class="t dr" style="left:156px;top:96px">4524.750000</div>
<div class="t dr" style="left:4px;top:112px">2022-01-21 07:00:00</div><div class="t dr" style="left:156px;top:112px">4470.250000</div>
<div class="t dr" style="left:4px;top:128px">2022-01-22 07:00:00</div><div class="t dr" style="left:156px;top:128px">4382.000000</div>
<div class="t dr" style="left:4px;top:144px">2022-01-25 07:00:00</div><div class="t dr" style="left:156px;top:144px">4382.000000</div>
<div class="t dr" style="left:4px;top:160px">2022-01-26 07:00:00</div><div class="t dr" style="left:156px;top:160px">4382.000000</div>
<div class="t dr" style="left:4px;top:176px">2022-01-27 07:00:00</div><div class="t dr" style="left:156px;top:176px">4382.000000</div>
<div class="t dr" style="left:4px;top:192px">2022-01-28 07:00:00</div><div class="t dr" style="left:156px;top:192px">4382.000000</div>
<div class="t dr" style="left:4px;top:208px">2022-01-29 07:00:00</div><div class="t dr" style="left:156px;top:208px">4382.000000</div>
<div class="t dr" style="left:4px;top:224px">2022-02-01 07:00:00</div><div class="t dr" style="left:156px;top:224px">4382.000000</div>
<div class="t dr" style="left:4px;top:240px">2022-02-02 07:00:00</div><div class="t dr" style="left:156px;top:240px">4382.000000</div>
<div class="t dr" style="left:4px;top:256px">2022-02-03 07:00:00</div><div class="t dr" style="left:156px;top:256px">4382.000000</div>
<div class="t dr" style="left:4px;top:272px">2022-02-04 07:00:00</div><div class="t dr" style="left:156px;top:272px">4382.000000</div>
<div class="t dr" style="left:4px;top:288px">2022-02-05 07:00:00</div><div class="t dr" style="left:156px;top:288px">4382.000000</div>
<div class="t dr" style="left:4px;top:304px">2022-02-08 07:00:00</div><div class="t dr" style="left:156px;top:304px">4382.000000</div>
<div class="t dr" style="left:4px;top:320px">2022-02-09 07:00:00</div><div class="t dr" style="left:156px;top:320px">4382.000000</div>
<div class="t dr" style="left:4px;top:336px">2022-02-10 07:00:00</div><div class="t dr" style="left:156px;top:336px">4382.000000</div>
<div class="t dr" style="left:4px;top:352px">2022-02-11 07:00:00</div><div class="t dr" style="left:156px;top:352px">4382.000000</div>
<div class="t dr" style="left:4px;top:368px">2022-02-12 07:00:00</div><div class="t dr" style="left:156px;top:368px">4382.000000</div>
<div class="t dr" style="left:4px;top:384px">2022-02-15 07:00:00</div><div class="t dr" style="left:156px;top:384px">4382.000000</div>
<div class="t dr" style="left:4px;top:400px">2022-02-16 07:00:00</div><div class="t dr" style="left:156px;top:400px">4382.000000</div>
<div class="t dr" style="left:4px;top:416px">2022-02-17 07:00:00</div><div class="t dr" style="left:156px;top:416px">4382.000000</div>
<div class="t dr" style="left:4px;top:432px">2022-02-18 07:00:00</div><div class="t dr" style="left:156px;top:432px">4382.000000</div>
<div class="t dr" style="left:4px;top:448px">2022-02-19 07:00:00</div><div class="t dr" style="left:156px;top:448px">4382.000000</div>
<div class="t dr" style="left:4px;top:464px">2022-02-22 07:00:00</div><div class="t dr" style="left:156px;top:464px">4382.000000</div>
<div class="t dr" style="left:4px;top:480px">2022-02-23 07:00:00</div><div class="t dr" style="left:156px;top:480px">4382.000000</div>
<div class="t dr" style="left:4px;top:496px">2022-02-24 07:00:00</div><div class="t dr" style="left:156px;top:496px">4382.000000</div>
</div>
<!-- debug toolbar icons -->
<svg style="left:951px;top:277px" width="16" height="15" viewBox="0 0 16 15"><path d="M5 0.500h10.500v8.500q-1 4-5 5h-8.500q3-1.500 3-5z" fill="#f4ec70" stroke="#c8c040" stroke-width="0.800"/><path d="M2 14q6 0 8.500-0.500q-1-2 0.500-3.500q-3 3-9 4z" fill="#d8d048"/><circle cx="2.200" cy="4" r="2" fill="#6a8ce0"/><circle cx="5.800" cy="4.300" r="2.200" fill="#4a6cd0"/><path d="M7.500 4.500h3" stroke="#3a4a90" stroke-width="1.200"/></svg>
<svg style="left:973px;top:277px" width="16" height="15" viewBox="0 0 16 15"><path d="M1 1.500h6M1 3.500h5M0.500 5.500h3M11 10.500h4.500M9.500 12.500h6M1 14.500h14" stroke="#c8c8c8" stroke-width="1"/><path d="M3 9l7-7.500l5.500 2.500l-7 8.500z" fill="#f4b8a8" stroke="#e8a090" stroke-width="0.600"/><path d="M3 9l5.500 3.500v1.800l-5.500-3.500z" fill="#dca078"/><path d="M8.500 12.500l7-8.500v1.800l-7 8.500z" fill="#e8b090"/></svg>
<!-- status bar -->
<div class="a" style="left:0;top:825px;width:1574px;height:1px;background:#5a5a5a"></div>
<div class="a" style="left:0;top:826px;width:1574px;height:21px;background:#f0f0f0"></div>
<div class="t" style="left:0px;top:828px;letter-spacing:-.2px">Ready</div>
<div class="a sc" style="left:1311px;width:53px"></div>
<div class="a sc" style="left:1366px;width:50px"></div>
<div class="a sc" style="left:1418px;width:27px"></div>
<div class="a sc" style="left:1447px;width:31px"></div>
<div class="a sc" style="left:1480px;width:36px"></div>
<div class="a sc" style="left:1518px;width:36px"></div>
<div class="t" style="left:1314px;top:828px">줄: 16</div>
<div class="t" style="left:1369px;top:828px">열: 1</div>
<div class="t" style="left:1421px;top:828px;letter-spacing:-.3px">INS</div>
<div class="t" style="left:1450px;top:828px;color:#8c8c8c;letter-spacing:-.55px">CAP</div>
<div class="t" style="left:1483px;top:828px;color:#8c8c8c">NUM</div>
<div class="t" style="left:1521px;top:828px;color:#8c8c8c;letter-spacing:-1.1px">SCRL</div>
<svg style="left:1559px;top:834px" width="13" height="13" viewBox="0 0 13 13" stroke="#8c8c8c" stroke-width="1" fill="none"><path d="M12.500 0.500L1 12M12.500 4.500L5 12M12.500 8.500L9 12"/></svg>
<div class="a" style="left:0;top:846px;width:1574px;height:3px;background:linear-gradient(#5a5d62,#45484c 40%,#3e4145)"></div>
<div class="a" style="left:1573px;top:0;width:1px;height:849px;background:linear-gradient(#ececec 0,#f4f4f4 15%,#9a9a9a 16%,#8a8a8a 96%,#505458 97%)"></div><div class="a" style="left:1572px;top:0;width:1px;height:128px;background:#f4f4f4"></div><div class="a" style="left:1572px;top:247px;width:1px;height:579px;background:#808080"></div>
</body>
</html>
